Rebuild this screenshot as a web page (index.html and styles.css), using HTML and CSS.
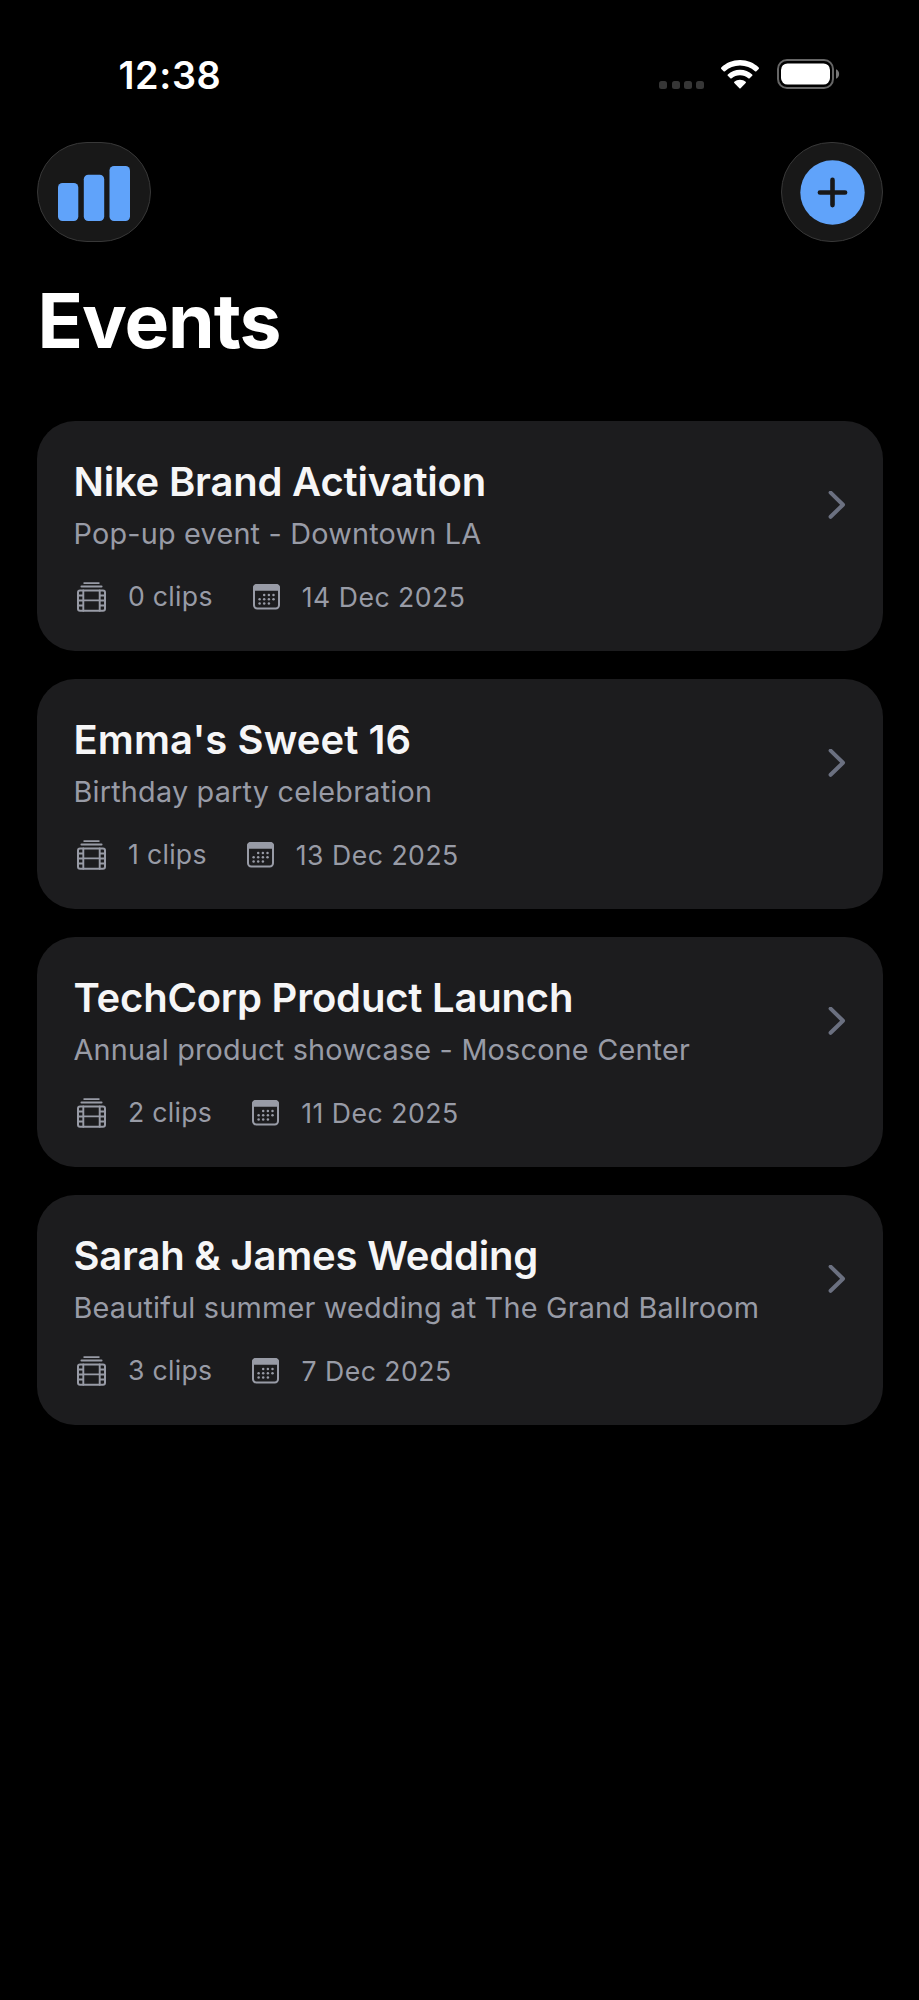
FILE: index.html
```
<!DOCTYPE html>
<html lang="en">
<head>
<meta charset="utf-8">
<title>Events</title>
<link rel="stylesheet" href="styles.css">
</head>
<body>
<svg class="sprite" aria-hidden="true">
  <symbol id="film" viewBox="0 0 29 31">
    <g fill="none" stroke="currentColor" stroke-linecap="round">
      <path stroke-width="1.9" d="M7.200 2.100h14.600M4.400 5.500h20.200"/>
      <rect stroke-width="2" x="1" y="9.400" width="27" height="20.400" rx="2"/>
      <path stroke-width="1.900" d="M6.300 9.400v20.400M22.700 9.400v20.400M6.300 19.400h16.400"/>
      <path stroke-width="1.900" stroke-linecap="butt" d="M1 14.500h5.300M1 19.500h5.300M1 24.500h5.300M22.700 14.500H28M22.700 19.500H28M22.700 24.500H28"/>
    </g>
  </symbol>
  <symbol id="calendar" viewBox="0 0 27 26">
    <rect x="1" y="1" width="25" height="23.400" rx="3.200" fill="none" stroke="currentColor" stroke-width="2"/>
    <path fill="currentColor" d="M4 0h19a4 4 0 0 1 4 4v2.800H0V4A4 4 0 0 1 4 0z"/>
    <g fill="currentColor">
      <circle cx="11.200" cy="10.900" r="1.250"/><circle cx="15.900" cy="10.900" r="1.250"/><circle cx="20.500" cy="10.900" r="1.250"/>
      <circle cx="6.600" cy="15.300" r="1.250"/><circle cx="11.200" cy="15.300" r="1.250"/><circle cx="15.900" cy="15.300" r="1.250"/><circle cx="20.500" cy="15.300" r="1.250"/>
      <circle cx="6.600" cy="19.600" r="1.250"/><circle cx="11.200" cy="19.600" r="1.250"/><circle cx="15.900" cy="19.600" r="1.250"/>
    </g>
  </symbol>
  <symbol id="chevron" viewBox="0 0 18 28">
    <path d="M2.600 1.600 15 13.700 2.600 25.800" fill="none" stroke="currentColor" stroke-width="4" stroke-linecap="round" stroke-linejoin="round"/>
  </symbol>
</svg>

<div class="status">
  <span class="time">12:38</span>
  <div class="indicators">
    <div class="cell"><i></i><i></i><i></i><i></i></div>
    <svg class="wifi" viewBox="0 0 38 29" fill="#fff">
      <path d="M19 0C26.400 0 33.100 2.900 37.700 7.500Q38.300 8.200 37.700 8.900L35.400 11.200Q34.700 11.800 34 11.200C30 7.500 24.800 5.400 19 5.400S8 7.500 4 11.200Q3.300 11.800 2.600 11.200L.3 8.900Q-.3 8.200 .3 7.500C4.900 2.900 11.600 0 19 0z"/>
      <path d="M19 9.800C23.700 9.800 28 11.500 31.200 14.400Q31.900 15.100 31.200 15.800L28.700 18.200Q28 18.800 27.300 18.200C25.100 16.300 22.200 15.200 19 15.200S12.900 16.300 10.700 18.200Q10 18.800 9.300 18.200L6.800 15.800Q6.100 15.100 6.800 14.400C10 11.500 14.300 9.800 19 9.800z"/>
      <path d="M19 19.800C21.200 19.800 23.200 20.500 24.700 21.800Q25.300 22.400 24.700 23.100L19.600 28.200Q19 28.800 18.400 28.200L13.300 23.100Q12.700 22.400 13.300 21.800C14.800 20.500 16.800 19.800 19 19.800z"/>
    </svg>
    <svg class="battery" viewBox="0 0 63 30">
      <rect x="1" y="1" width="55" height="28" rx="9" fill="none" stroke="#666" stroke-width="2"/>
      <rect x="4" y="4.400" width="49" height="21.200" rx="6.500" fill="#fff"/>
      <path d="M59 10.200c4.200 1.600 4.200 8 0 9.600z" fill="#777"/>
    </svg>
  </div>
</div>

<header class="toolbar">
  <button class="glass stats" aria-label="Statistics">
    <svg class="bars" viewBox="0 0 72 55" fill="#60a3fa">
      <rect x="0" y="17" width="20.300" height="38" rx="4.500"/>
      <rect x="25.800" y="8.700" width="20.400" height="46.300" rx="4.500"/>
      <rect x="51.500" y="0" width="20.500" height="55" rx="4.500"/>
    </svg>
  </button>
  <button class="glass add" aria-label="Add event">
    <svg class="plus" viewBox="0 0 65 65">
      <circle cx="32.500" cy="32.500" r="32.200" fill="#60a3fa"/>
      <path d="M32.500 19.900v25.200M19.900 32.500h25.200" stroke="#181818" stroke-width="4.600" stroke-linecap="round"/>
    </svg>
  </button>
</header>

<h1 class="heading">Events</h1>

<main class="list">
  <article class="card">
    <div class="body">
      <h2 class="title">Nike Brand Activation</h2>
      <p class="sub">Pop-up event - Downtown LA</p>
      <div class="meta">
        <svg class="film"><use href="#film"/></svg><span class="clips">0 clips</span>
        <svg class="cal"><use href="#calendar"/></svg><span class="date">14 Dec 2025</span>
      </div>
    </div>
    <svg class="chev"><use href="#chevron"/></svg>
  </article>
  <article class="card">
    <div class="body">
      <h2 class="title loose">Emma's Sweet 16</h2>
      <p class="sub">Birthday party celebration</p>
      <div class="meta">
        <svg class="film"><use href="#film"/></svg><span class="clips">1 clips</span>
        <svg class="cal"><use href="#calendar"/></svg><span class="date">13 Dec 2025</span>
      </div>
    </div>
    <svg class="chev"><use href="#chevron"/></svg>
  </article>
  <article class="card">
    <div class="body">
      <h2 class="title">TechCorp Product Launch</h2>
      <p class="sub">Annual product showcase - Moscone Center</p>
      <div class="meta">
        <svg class="film"><use href="#film"/></svg><span class="clips">2 clips</span>
        <svg class="cal"><use href="#calendar"/></svg><span class="date">11 Dec 2025</span>
      </div>
    </div>
    <svg class="chev"><use href="#chevron"/></svg>
  </article>
  <article class="card">
    <div class="body">
      <h2 class="title">Sarah &amp; James Wedding</h2>
      <p class="sub">Beautiful summer wedding at The Grand Ballroom</p>
      <div class="meta">
        <svg class="film"><use href="#film"/></svg><span class="clips">3 clips</span>
        <svg class="cal"><use href="#calendar"/></svg><span class="date">7 Dec 2025</span>
      </div>
    </div>
    <svg class="chev"><use href="#chevron"/></svg>
  </article>
</main>
</body>
</html>
```
FILE: styles.css
```
* { box-sizing: border-box; }
html { background: #000; }
body {
  margin: 0;
  min-height: 2000px;
  background: #000;
  color: #fff;
  font-family: Inter, "Liberation Sans", sans-serif;
}
h1, h2, p { margin: 0; }
svg { display: block; flex: none; }
.sprite { display: none; }

.status {
  display: flex;
  justify-content: space-between;
  align-items: flex-start;
  height: 142px;
  padding: 51px 79.500px 0 118.500px;
}
.time { font-size: 37.800px; font-weight: 600; line-height: 48px; letter-spacing: 0.600px; }
.indicators { display: flex; padding-top: 8px; }
.cell { display: flex; gap: 4.200px; padding-top: 22px; margin-right: 17px; }
.cell i { width: 8px; height: 8px; border-radius: 2.500px; background: #363636; }
.wifi { width: 38px; height: 29px; margin: 1px 17.500px 0 0; }
.battery { width: 63px; height: 30px; }

.toolbar { display: flex; justify-content: space-between; padding: 0 36px 0 37px; }
.glass {
  display: flex;
  align-items: center;
  justify-content: center;
  height: 100px;
  padding: 0;
  border: 1.500px solid #383838;
  border-radius: 50px;
  background: #181818;
}
.stats { width: 114px; }
.add { width: 102px; }
.bars { width: 72px; height: 55px; margin-top: 2px; }
.plus { width: 65px; height: 65px; }

.heading {
  margin: 33px 0 0 37.500px;
  font-size: 75px;
  font-weight: 700;
  line-height: 92px;
  letter-spacing: -1.100px;
}

.list { display: flex; flex-direction: column; gap: 28px; padding: 54px 36px 0 37px; }
.card {
  display: flex;
  justify-content: space-between;
  align-items: flex-start;
  height: 230px;
  padding: 37px 37px 0 36.500px;
  border-radius: 38px;
  background: #1c1c1e;
}
.title {
  color: #f6f6f7;
  font-size: 40px;
  font-weight: 600;
  line-height: 48px;
  letter-spacing: -0.200px;
  white-space: nowrap;
}
.title.loose { letter-spacing: 0.080px; }
.sub {
  margin-top: 10px;
  color: #989ba6;
  font-size: 28.800px;
  line-height: 36px;
  letter-spacing: 0.210px;
  white-space: nowrap;
}
.meta {
  display: flex;
  align-items: flex-start;
  margin-top: 28px;
  color: #989ba6;
  font-size: 26.600px;
  line-height: 32px;
  white-space: nowrap;
}
.clips { letter-spacing: 0.300px; }
.film { width: 29px; height: 31px; margin: 0.500px 22.500px 0 3px; }
.cal { width: 27px; height: 26px; margin: 4px 22px 0 40px; }
.date { margin-top: 1px; letter-spacing: 0.500px; }
.chev { width: 18px; height: 28px; margin-top: 33px; color: #6b7080; }
```
